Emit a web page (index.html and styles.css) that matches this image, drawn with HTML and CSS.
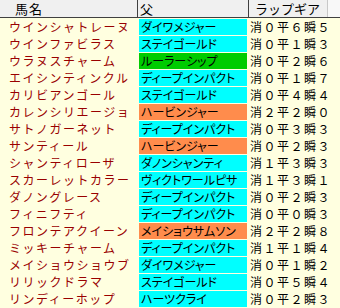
FILE: index.html
```html
<!DOCTYPE html>
<html lang="ja">
<head>
<meta charset="utf-8">
<link rel="stylesheet" href="styles.css">
</head>
<body>
<div class="table">
  <div class="head">
    <div class="h h-name">馬名</div>
    <div class="h h-sire">父</div>
    <div class="h h-lap">ラップギア</div>
    <div class="h h-end"></div>
  </div>
  <div class="rows">
    <div class="name">ウインシャトレーヌ</div><div class="sire cy">ダイワメジャー</div><div class="lap">消０平６瞬５</div>
    <div class="name">ウインファビラス</div><div class="sire cy">ステイゴールド</div><div class="lap">消０平１瞬３</div>
    <div class="name">ウラヌスチャーム</div><div class="sire gr">ルーラーシップ</div><div class="lap">消０平２瞬６</div>
    <div class="name">エイシンティンクル</div><div class="sire cy">ディープインパクト</div><div class="lap">消０平１瞬７</div>
    <div class="name">カリビアンゴール</div><div class="sire cy">ステイゴールド</div><div class="lap">消０平４瞬４</div>
    <div class="name">カレンシリエージョ</div><div class="sire or">ハービンジャー</div><div class="lap">消２平２瞬０</div>
    <div class="name">サトノガーネット</div><div class="sire cy">ディープインパクト</div><div class="lap">消０平３瞬３</div>
    <div class="name">サンティール</div><div class="sire or">ハービンジャー</div><div class="lap">消０平２瞬３</div>
    <div class="name">シャンティローザ</div><div class="sire cy">ダノンシャンティ</div><div class="lap">消１平３瞬３</div>
    <div class="name">スカーレットカラー</div><div class="sire cy">ヴィクトワールピサ</div><div class="lap">消１平３瞬１</div>
    <div class="name">ダノングレース</div><div class="sire cy">ディープインパクト</div><div class="lap">消０平２瞬３</div>
    <div class="name">フィニフティ</div><div class="sire cy">ディープインパクト</div><div class="lap">消０平０瞬３</div>
    <div class="name">フロンテアクイーン</div><div class="sire or">メイショウサムソン</div><div class="lap">消２平２瞬８</div>
    <div class="name">ミッキーチャーム</div><div class="sire cy">ディープインパクト</div><div class="lap">消１平１瞬４</div>
    <div class="name">メイショウショウブ</div><div class="sire cy">ダイワメジャー</div><div class="lap">消０平１瞬２</div>
    <div class="name">リリックドラマ</div><div class="sire cy">ステイゴールド</div><div class="lap">消０平５瞬４</div>
    <div class="name">リンディーホップ</div><div class="sire cy">ハーツクライ</div><div class="lap">消０平２瞬３</div>
  </div>
</div>
</body>
</html>
```
FILE: styles.css
```css
html, body {
  margin: 0;
  padding: 0;
  background: #ffffe0;
}
body {
  width: 340px;
  height: 308px;
  overflow: hidden;
  font-family: "Noto Sans CJK JP", "DejaVu Sans", sans-serif;
  font-size: 12px;
}
.table {
  display: flex;
  flex-direction: column;
}
.head {
  display: grid;
  grid-template-columns: 138px 111px 79px 12px;
  height: 17px;
  background: #f0f0f0;
  border-bottom: 1px solid #404040;
}
.h {
  color: #000;
  font-size: 13px;
  line-height: 17px;
}
.h-name { padding-left: 15px; letter-spacing: 1px; border-right: 1px solid #404040; }
.h-sire { padding-left: 2px; border-right: 1px solid #404040; }
.h-lap { padding-left: 6px; border-right: 1px solid #c8c8c8; }
.h-end { background: #f8f8f8; }
.rows {
  display: grid;
  grid-template-columns: 139px 108px 93px;
  grid-auto-rows: 16px;
  row-gap: 1px;
  padding-top: 1px;
}
.name {
  color: #990000;
  padding-left: 9px;
  line-height: 16px;
  letter-spacing: 1.5px;
  white-space: nowrap;
  overflow: hidden;
}
.sire {
  color: #000;
  padding-left: 2px;
  line-height: 16px;
  font-feature-settings: "palt";
  white-space: nowrap;
  overflow: hidden;
}
.cy { background: #00ffff; }
.gr { background: #00cc00; }
.or { background: #ff8c4c; }
.lap {
  color: #000;
  padding-left: 3px;
  line-height: 16px;
  letter-spacing: 1.5px;
  white-space: nowrap;
}
```
